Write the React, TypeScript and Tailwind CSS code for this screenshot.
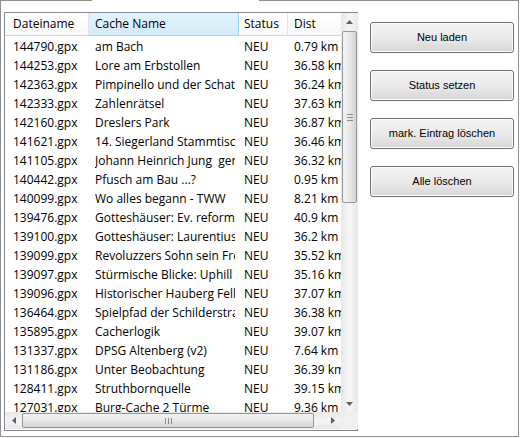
import React from "react";

type Row = { file: string; name: string; status: string; dist: string };

const rows: Row[] = [
  { file: "144790.gpx", name: "am Bach", status: "NEU", dist: "0.79 km" },
  { file: "144253.gpx", name: "Lore am Erbstollen", status: "NEU", dist: "36.58 km" },
  { file: "142363.gpx", name: "Pimpinello und der Schatz", status: "NEU", dist: "36.24 km" },
  { file: "142333.gpx", name: "Zahlenrätsel", status: "NEU", dist: "37.63 km" },
  { file: "142160.gpx", name: "Dreslers Park", status: "NEU", dist: "36.87 km" },
  { file: "141621.gpx", name: "14. Siegerland Stammtisch", status: "NEU", dist: "36.46 km" },
  { file: "141105.gpx", name: "Johann Heinrich Jung  genannt Stilling", status: "NEU", dist: "36.32 km" },
  { file: "140442.gpx", name: "Pfusch am Bau ...?", status: "NEU", dist: "0.95 km" },
  { file: "140099.gpx", name: "Wo alles begann - TWW", status: "NEU", dist: "8.21 km" },
  { file: "139476.gpx", name: "Gotteshäuser: Ev. reformierte Kirche", status: "NEU", dist: "40.9 km" },
  { file: "139100.gpx", name: "Gotteshäuser: Laurentiuskirche", status: "NEU", dist: "36.2 km" },
  { file: "139099.gpx", name: "Revoluzzers Sohn sein Freund", status: "NEU", dist: "35.52 km" },
  { file: "139097.gpx", name: "Stürmische Blicke: Uphill", status: "NEU", dist: "35.16 km" },
  { file: "139096.gpx", name: "Historischer Hauberg Fellinghausen", status: "NEU", dist: "37.07 km" },
  { file: "136464.gpx", name: "Spielpfad der Schilderstraße", status: "NEU", dist: "36.38 km" },
  { file: "135895.gpx", name: "Cacherlogik", status: "NEU", dist: "39.07 km" },
  { file: "131337.gpx", name: "DPSG Altenberg (v2)", status: "NEU", dist: "7.64 km" },
  { file: "131186.gpx", name: "Unter Beobachtung", status: "NEU", dist: "36.39 km" },
  { file: "128411.gpx", name: "Struthbornquelle", status: "NEU", dist: "39.15 km" },
  { file: "127031.gpx", name: "Burg-Cache 2 Türme", status: "NEU", dist: "9.36 km" },
];

const buttons = ["Neu laden", "Status setzen", "mark. Eintrag löschen", "Alle löschen"];

const cols = "grid grid-cols-[84px_150px_49px_80px]";

const Arrow = ({ dir }: { dir: "up" | "down" | "left" | "right" }) => {
  const pts = {
    up: "0,4 3.5,0 7,4",
    down: "0,0 3.5,4 7,0",
    left: "4,0 0,3.5 4,7",
    right: "0,0 4,3.5 0,7",
  }[dir];
  const vert = dir === "up" || dir === "down";
  return (
    <svg width={vert ? 7 : 4} height={vert ? 4 : 7} viewBox={vert ? "0 0 7 4" : "0 0 4 7"}>
      <polygon points={pts} fill="#606060" />
    </svg>
  );
};

// a list cell: padding outside, clipping inside so the text stops short of the column edge
const Cell = ({ pl, children }: { pl: string; children: React.ReactNode }) => (
  <div className={`${pl} pr-[4px] min-w-0`}>
    <div className="whitespace-pre overflow-hidden">{children}</div>
  </div>
);

export default function App() {
  return (
    <div className="w-[520px] h-[438px] bg-white" style={{ fontFamily: "'Open Sans', 'Noto Sans', sans-serif" }}>
      <div className="w-[519px] h-[437px] flex flex-col border-l border-r border-b border-[#8e8f8f]">
        {/* tab top edge, open where the active tab sits */}
        <div className="flex h-px">
          <div className="w-[90px] bg-[#8e8f8f]" />
          <div className="w-px bg-[#8e8f8f]" />
          <div className="w-[167px] bg-white" />
          <div className="w-px bg-[#8e8f8f]" />
          <div className="flex-1 bg-[#8e8f8f]" />
        </div>

        <div className="flex pl-[3px] pt-[11px]">
          {/* list view */}
          <div className="w-[354px] h-[419px] border border-[#828790] grid grid-cols-[336px_17px] grid-rows-[399px_17px]">
            <div className="overflow-hidden">
              <div className={`${cols} h-[23px] text-[12px] text-black`}>
                <div className="flex items-center pl-[8px] border-r border-[#e3e4e6] border-b border-b-[#d5d5d5] bg-gradient-to-b from-white to-[#f7f8f9]">
                  Dateiname
                </div>
                <div className="flex items-center pl-[6px] border-r border-[#96d9f9] border-b bg-gradient-to-b from-[#e3f4fc] to-[#d1ebf8]">
                  Cache Name
                </div>
                <div className="flex items-center pl-[5px] border-r border-[#e3e4e6] border-b border-b-[#d5d5d5] bg-gradient-to-b from-white to-[#f7f8f9]">
                  Status
                </div>
                <div className="flex items-center pl-[6px] border-b border-[#d5d5d5] bg-gradient-to-b from-white to-[#f7f8f9]">
                  Dist
                </div>
              </div>
              <div className="pt-px">
                {rows.map((r) => (
                  <div key={r.file} className={`${cols} h-[19px] items-center text-[12px] text-black`}>
                    <Cell pl="pl-[8px]">{r.file}</Cell>
                    <Cell pl="pl-[6px]">{r.name}</Cell>
                    <Cell pl="pl-[5px]">{r.status}</Cell>
                    <Cell pl="pl-[6px]">{r.dist}</Cell>
                  </div>
                ))}
              </div>
            </div>

            {/* vertical scrollbar */}
            <div className="flex flex-col bg-gradient-to-r from-[#e8e8e8] via-[#f5f5f5] to-[#e8e8e8]">
              <div className="h-[17px] flex items-center justify-center">
                <Arrow dir="up" />
              </div>
              <div className="h-[172px] mt-px mx-px rounded-[2px] border border-[#979797] bg-gradient-to-r from-[#f3f3f3] via-[#e8e8e8] to-[#d4d4d4] flex items-center justify-center">
                <div className="flex flex-col gap-[2px]">
                  <div className="w-[6px] h-px bg-[#8a8a8a]" />
                  <div className="w-[6px] h-px bg-[#8a8a8a]" />
                  <div className="w-[6px] h-px bg-[#8a8a8a]" />
                </div>
              </div>
              <div className="flex-1" />
              <div className="h-[17px] flex items-center justify-center">
                <Arrow dir="down" />
              </div>
            </div>

            {/* horizontal scrollbar */}
            <div className="flex bg-gradient-to-b from-[#e8e8e8] via-[#f5f5f5] to-[#e8e8e8]">
              <div className="w-[17px] flex items-center justify-center">
                <Arrow dir="left" />
              </div>
              <div className="w-[292px] my-px rounded-[2px] border border-[#979797] bg-gradient-to-b from-[#f3f3f3] via-[#e8e8e8] to-[#d4d4d4] flex items-center justify-center">
                <div className="flex gap-[2px]">
                  <div className="w-px h-[6px] bg-[#8a8a8a]" />
                  <div className="w-px h-[6px] bg-[#8a8a8a]" />
                  <div className="w-px h-[6px] bg-[#8a8a8a]" />
                </div>
              </div>
              <div className="flex-1" />
              <div className="w-[17px] flex items-center justify-center">
                <Arrow dir="right" />
              </div>
            </div>
            <div className="bg-[#f0f0f0]" />
          </div>

          {/* buttons */}
          <div className="ml-[12px] pt-[10px] flex flex-col gap-[17px]">
            {buttons.map((b) => (
              <button
                key={b}
                className="w-[144px] h-[31px] rounded-[3px] border border-[#707070] bg-gradient-to-b from-[#f2f2f2] via-[#ebebeb] to-[#d6d6d6] shadow-[inset_0_0_0_1px_#fcfcfc] text-[11px] text-black"
                style={{ fontFamily: "'Liberation Sans', Arial, sans-serif" }}
              >
                {b}
              </button>
            ))}
          </div>
        </div>
      </div>
    </div>
  );
}
